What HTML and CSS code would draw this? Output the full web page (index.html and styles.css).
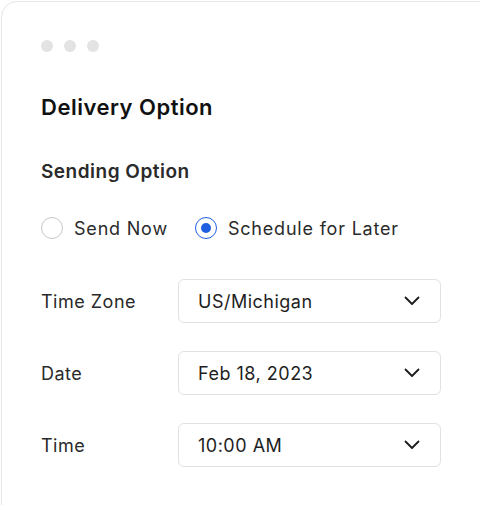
FILE: index.html
```html
<!DOCTYPE html>
<html lang="en">
<head>
<meta charset="utf-8">
<link rel="stylesheet" href="styles.css">
</head>
<body>
<div class="card">
  <div class="dots"><span class="dot"></span><span class="dot"></span><span class="dot"></span></div>
  <h1 class="title">Delivery Option</h1>
  <h2 class="subtitle">Sending Option</h2>
  <div class="radios">
    <label class="radio"><span class="circle"></span><span>Send Now</span></label>
    <label class="radio checked"><span class="circle"></span><span>Schedule for Later</span></label>
  </div>
  <div class="row">
    <span class="label">Time Zone</span>
    <div class="select"><span>US/Michigan</span>
      <svg class="chev" width="16" height="10" viewBox="0 0 16 10"><path d="M1.5 1.5 L8 8 L14.5 1.5" fill="none" stroke="#1c1c1c" stroke-width="1.8" stroke-linecap="round" stroke-linejoin="round"/></svg>
    </div>
  </div>
  <div class="row">
    <span class="label">Date</span>
    <div class="select"><span>Feb 18, 2023</span>
      <svg class="chev" width="16" height="10" viewBox="0 0 16 10"><path d="M1.5 1.5 L8 8 L14.5 1.5" fill="none" stroke="#1c1c1c" stroke-width="1.8" stroke-linecap="round" stroke-linejoin="round"/></svg>
    </div>
  </div>
  <div class="row">
    <span class="label">Time</span>
    <div class="select"><span>10:00 AM</span>
      <svg class="chev" width="16" height="10" viewBox="0 0 16 10"><path d="M1.5 1.5 L8 8 L14.5 1.5" fill="none" stroke="#1c1c1c" stroke-width="1.8" stroke-linecap="round" stroke-linejoin="round"/></svg>
    </div>
  </div>
</div>
</body>
</html>
```
FILE: styles.css
```css
html, body {
  margin: 0;
  padding: 0;
  background: #fff;
  overflow: hidden;
}
body {
  font-family: Inter, "Liberation Sans", sans-serif;
  color: #222;
  width: 480px;
  height: 505px;
}
.card {
  margin: 1px 0 0 1px;
  width: 600px;
  height: 600px;
  box-sizing: border-box;
  border: 1px solid #e6e6e6;
  border-radius: 16px;
  padding: 38px 0 0 39px;
}
.dots {
  display: flex;
  gap: 11px;
}
.dot {
  width: 12px;
  height: 12px;
  border-radius: 50%;
  background: #e3e3e3;
}
.title {
  margin: 41px 0 0;
  font-size: 22px;
  line-height: 28px;
  font-weight: 600;
  letter-spacing: 0.5px;
  color: #111;
}
.subtitle {
  margin: 39px 0 0;
  font-size: 19px;
  line-height: 24px;
  font-weight: 600;
  letter-spacing: 0.5px;
  color: #2a2a2a;
}
.radios {
  display: flex;
  gap: 27px;
  margin-top: 32px;
  height: 24px;
  align-items: center;
}
.radio {
  display: flex;
  align-items: center;
  gap: 11px;
  font-size: 18px;
  letter-spacing: 0.8px;
  color: #2a2a2a;
}
.circle {
  width: 22px;
  height: 22px;
  box-sizing: border-box;
  border: 1.5px solid #c8c8c8;
  border-radius: 50%;
  display: flex;
  align-items: center;
  justify-content: center;
}
.checked .circle {
  border-color: #1f5fe0;
}
.checked .circle::after {
  content: "";
  width: 10px;
  height: 10px;
  border-radius: 50%;
  background: #1f5fe0;
}
.row {
  display: flex;
  align-items: center;
  margin-top: 28px;
}
.radios + .row {
  margin-top: 39px;
}
.label {
  width: 137px;
  font-size: 18px;
  letter-spacing: 0.5px;
  color: #2a2a2a;
}
.select {
  width: 263px;
  height: 44px;
  box-sizing: border-box;
  border: 1px solid #e2e2e2;
  border-radius: 6px;
  display: flex;
  align-items: center;
  justify-content: space-between;
  padding: 0 20px 0 19px;
  font-size: 18px;
  letter-spacing: 0.5px;
  color: #1e1e1e;
}
.chev {
  display: block;
}
```
